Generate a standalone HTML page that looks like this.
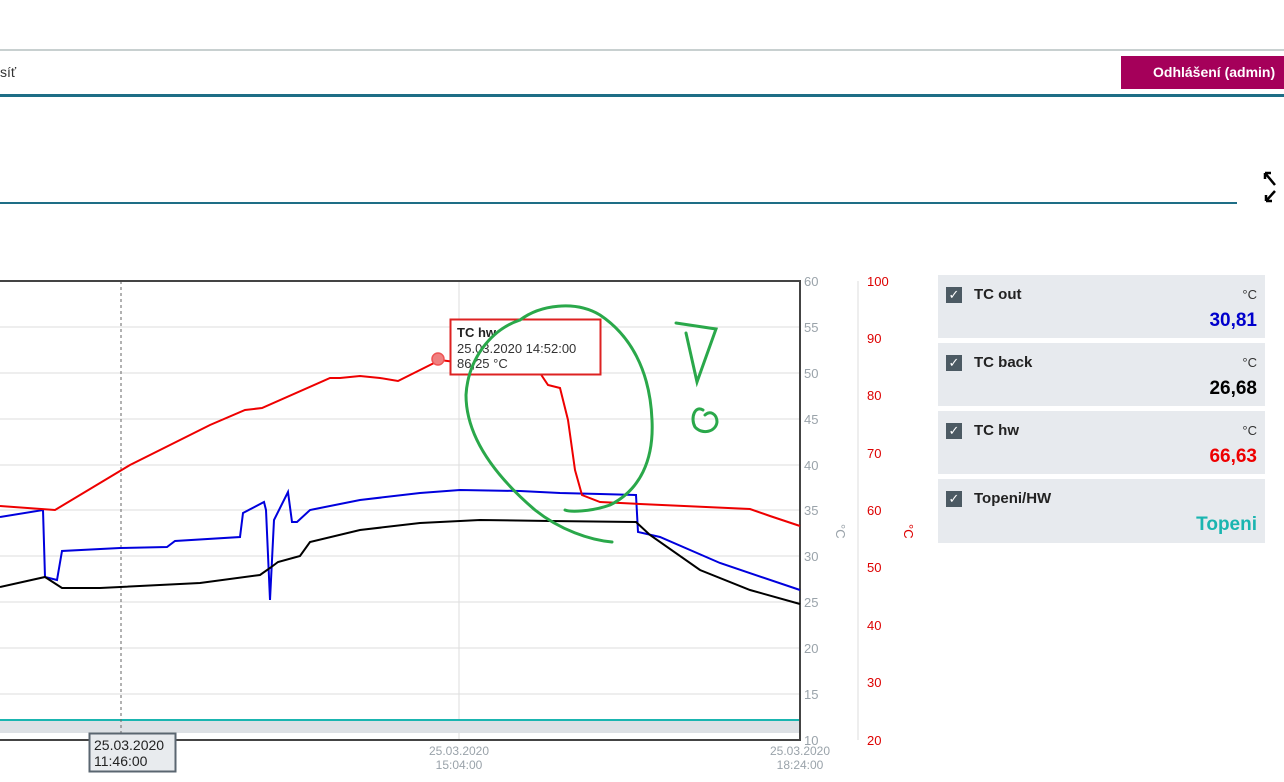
<!DOCTYPE html><html><head><meta charset="utf-8"><style>
body{margin:0;width:1284px;height:782px;overflow:hidden;background:#fff;font-family:"Liberation Sans",sans-serif;position:relative}
.a{position:absolute}
.p{position:absolute;left:938px;width:327px;height:63px;background:#e7eaee}
.cb{position:absolute;left:8px;top:12px;width:16px;height:16px;background:#4c5a63;color:#fff;font-size:13px;line-height:16px;text-align:center}
.nm{position:absolute;left:36px;top:11px;font-size:15px;font-weight:bold;color:#222}
.u{position:absolute;right:8px;top:12px;font-size:13px;color:#333}
.v{position:absolute;right:8px;top:35px;font-size:19px;font-weight:bold}
</style></head><body>
<div class="a" style="left:0;top:49px;width:1284px;height:2px;background:#c8d0d0"></div>
<div class="a" style="left:0;top:64px;font-size:14px;color:#333">síť</div>
<div class="a" style="left:1121px;top:56px;width:163px;height:33px;background:#a5005a;color:#fff;font-size:14px;font-weight:bold;line-height:33px;padding-left:32px;box-sizing:border-box">Odhlášení (admin)</div>
<div class="a" style="left:0;top:94px;width:1284px;height:3px;background:#1e6e86"></div>
<div class="a" style="left:0;top:202px;width:1237px;height:2px;background:#1e6e86"></div>
<svg class="a" style="left:1262px;top:170px" width="20" height="36"><path d="M3 3l10 12M3 3v6M3 3h6M13 21L4 31M4 31v-6M4 31h6" stroke="#000" stroke-width="2.5" fill="none"/></svg>
<svg class="a" style="left:0;top:270px" width="930" height="512" font-family="Liberation Sans" font-size="12">
<g transform="translate(0,-270)">
<g stroke="#ddd" stroke-width="1">
<path d="M0 327H800M0 373H800M0 419H800M0 465H800M0 510H800M0 556H800M0 602H800M0 648H800M0 694H800M459 281V740"/></g>
<rect x="0" y="721" width="800" height="12" fill="#dde1e5"/>
<line x1="0" y1="720" x2="800" y2="720" stroke="#1ab5b0" stroke-width="2"/>
<line x1="121" y1="281" x2="121" y2="740" stroke="#666" stroke-dasharray="3,3"/>
<path d="M0 281H800V740H0" fill="none" stroke="#444" stroke-width="2"/>
<line x1="858" y1="281" x2="858" y2="740" stroke="#ddd"/>
<polyline fill="none" stroke="#0000dd" stroke-width="2" points="0,517 43,510 45,577 57,580 62,551 120,548 167,547 175,541 240,537 243,513 264,502 266,510 270,600 274,520 288,492 292,522 297,522 310,510 360,500 420,493 460,490 520,491 560,493 600,494 636,495 638,532 660,537 720,563 800,590"/>
<polyline fill="none" stroke="#000" stroke-width="2" points="0,587 45,577 62,588 100,588 200,583 260,575 270,568 278,562 300,556 310,542 360,530 420,523 480,520 550,521 636,522 650,535 700,570 750,590 800,604"/>
<polyline fill="none" stroke="#e00" stroke-width="2" points="0,506 55,510 130,465 210,425 245,410 262,408 330,378 340,378 360,376 380,378 398,381 440,360 540,373 548,385 560,388 568,420 575,470 582,495 600,502 640,504 750,509 770,516 800,526"/>
<circle cx="438" cy="359" r="6" fill="#f08080" stroke="#e55" stroke-width="1.5"/>
<rect x="450.5" y="319.5" width="150" height="55" fill="#fff" stroke="#d22" stroke-width="2"/>
<text x="457" y="337" font-weight="bold" font-size="13" fill="#222">TC hw</text>
<text x="457" y="353" font-size="13" fill="#333">25.03.2020 14:52:00</text>
<text x="457" y="368" font-size="13" fill="#333">86,25 °C</text>
<g fill="#9aa3aa" font-size="13">
<text x="804" y="286">60</text><text x="804" y="332">55</text><text x="804" y="378">50</text><text x="804" y="424">45</text><text x="804" y="470">40</text><text x="804" y="515">35</text><text x="804" y="561">30</text><text x="804" y="607">25</text><text x="804" y="653">20</text><text x="804" y="699">15</text><text x="804" y="745">10</text>
<text x="840" y="528" transform="rotate(90 840 524)">°C</text>
<text x="459" y="755" text-anchor="middle" font-size="12">25.03.2020</text><text x="459" y="769" text-anchor="middle" font-size="12">15:04:00</text>
<text x="800" y="755" text-anchor="middle" font-size="12">25.03.2020</text><text x="800" y="769" text-anchor="middle" font-size="12">18:24:00</text>
</g>
<g fill="#d00" font-size="13">
<text x="867" y="286">100</text><text x="867" y="343">90</text><text x="867" y="400">80</text><text x="867" y="458">70</text><text x="867" y="515">60</text><text x="867" y="572">50</text><text x="867" y="630">40</text><text x="867" y="687">30</text><text x="867" y="745">20</text>
<text x="908" y="528" transform="rotate(90 908 524)">°C</text>
</g>
<rect x="89.5" y="733.5" width="86" height="38" fill="#e8ebee" stroke="#5a6670" stroke-width="2"/>
<text x="94" y="750" font-size="14" fill="#222">25.03.2020</text><text x="94" y="766" font-size="14" fill="#222">11:46:00</text>
<g fill="none" stroke="#2aa84a" stroke-width="3" stroke-linecap="round">
<path d="M520 320C490 330 468 360 466 395C466 440 500 480 535 510C560 530 590 540 612 542M520 320C540 305 575 300 600 315C630 335 650 370 652 420C654 460 640 490 610 505C590 512 570 512 565 510"/>
<path d="M676 323L716 329L697 382L686 333"/>
<path d="M703 410C695 405 690 418 695 427C702 435 716 432 717 422C717 414 710 410 705 415"/>
</g>
</g></svg>
<div class="p" style="top:275px"><div class="cb">✓</div><div class="nm">TC out</div><div class="u">°C</div><div class="v" style="color:#00c">30,81</div></div>
<div class="p" style="top:343px"><div class="cb">✓</div><div class="nm">TC back</div><div class="u">°C</div><div class="v" style="color:#000">26,68</div></div>
<div class="p" style="top:411px"><div class="cb">✓</div><div class="nm">TC hw</div><div class="u">°C</div><div class="v" style="color:#e00">66,63</div></div>
<div class="p" style="top:479px;height:64px"><div class="cb">✓</div><div class="nm">Topeni/HW</div><div class="v" style="color:#1ab5b0">Topeni</div></div>
</body></html>
